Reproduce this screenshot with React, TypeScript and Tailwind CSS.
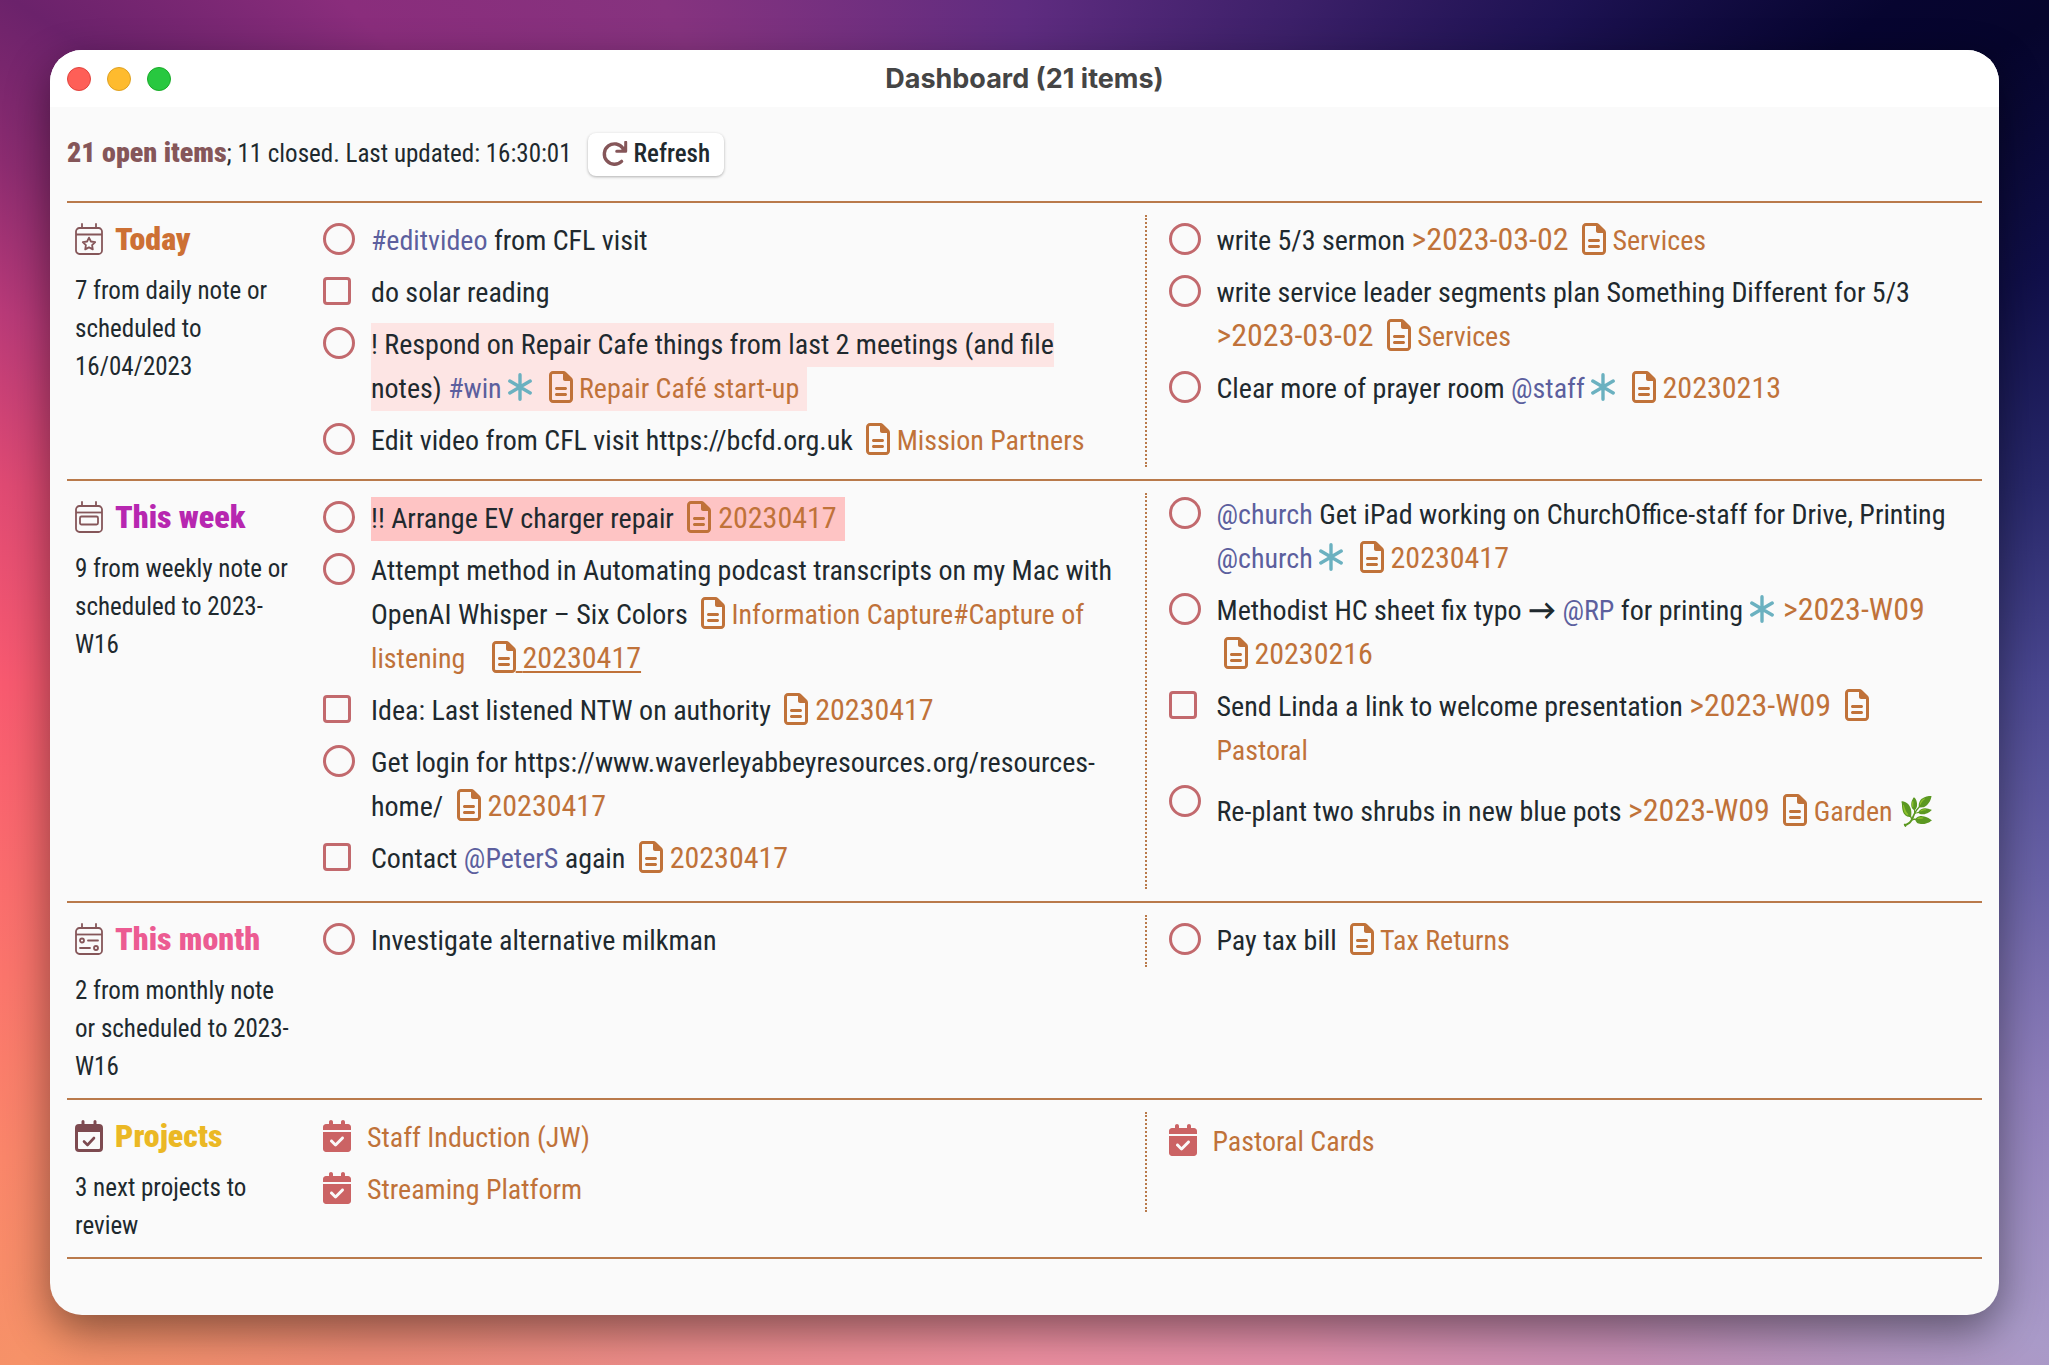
import React, { useId } from "react";
import type { ReactNode } from "react";
import { FaCalendarCheck, FaRegFileLines } from "react-icons/fa6";

/* ---------- icons ---------- */

function CalendarFrame({ children }: { children: ReactNode }) {
  return (
    <svg
      viewBox="0 0 28 32"
      className="h-8 w-7 shrink-0 text-[#855659]"
      fill="none"
      stroke="currentColor"
      strokeWidth="1.8"
      strokeLinecap="round"
      strokeLinejoin="round"
      aria-hidden="true"
    >
      <path d="M7 1v4M21 1v4" />
      <rect x="1" y="5" width="26" height="26" rx="3.5" />
      <path d="M1 11.5h26" strokeLinecap="butt" />
      {children}
    </svg>
  );
}

function CalendarStar() {
  return (
    <CalendarFrame>
      <path d="M14 14.6l1.9 3.9 4.3.6-3.1 3 .7 4.3-3.8-2-3.8 2 .7-4.3-3.1-3 4.3-.6z" />
    </CalendarFrame>
  );
}

function CalendarWeek() {
  return (
    <CalendarFrame>
      <rect x="5" y="15.5" width="18" height="8" rx="1.5" />
    </CalendarFrame>
  );
}

function CalendarMonth() {
  return (
    <CalendarFrame>
      <circle cx="7" cy="17.5" r="2" />
      <path d="M13 17.5h10" />
      <circle cx="21" cy="25" r="2" />
      <path d="M5 25h10" />
    </CalendarFrame>
  );
}

function CalendarCheckBold() {
  return (
    <svg
      viewBox="0 0 28 32"
      className="h-8 w-7 shrink-0 text-[#7d4a50]"
      fill="none"
      stroke="currentColor"
      strokeWidth="3"
      strokeLinecap="round"
      strokeLinejoin="round"
      aria-hidden="true"
    >
      <path d="M8 1.5v4M20 1.5v4" />
      <rect x="1.5" y="5.5" width="25" height="25" rx="2.5" />
      <path d="M2 5.5h24v6.5H2z" fill="currentColor" stroke="none" />
      <path d="M9 21.5l3.5 3.5 6.5-7" strokeWidth="2.6" />
    </svg>
  );
}

function Asterisk() {
  return (
    <svg
      viewBox="0 0 24 28"
      className="mr-[3px] inline h-7 w-6 align-[-3px] text-[#6bb1c0]"
      fill="none"
      stroke="currentColor"
      strokeWidth="3.4"
      strokeLinecap="round"
      aria-hidden="true"
    >
      <path d="M12 1.8v24.4M1.8 8l20.4 12M22.2 8L1.8 20" />
    </svg>
  );
}

function RefreshIcon() {
  return (
    <svg
      viewBox="0 0 26 26"
      className="size-[26px] text-[#855659]"
      fill="none"
      stroke="currentColor"
      strokeWidth="3.4"
      aria-hidden="true"
    >
      <path d="M19.6 20.4A10.2 10.2 0 1 1 21 7.4" strokeLinecap="round" />
      <path d="M23.7 1.2v9h-9" strokeWidth="3" strokeLinecap="round" strokeLinejoin="round" />
      <path d="M18 10l5-5v5z" fill="currentColor" stroke="none" />
    </svg>
  );
}

/* ---------- inline pieces ---------- */

function FileIcon() {
  return <FaRegFileLines className="ml-[7px] inline h-8 w-6 align-[-5px]" aria-hidden="true" />;
}

function NoteLink({ children }: { children: ReactNode }) {
  return (
    <a href="#" className="text-[#c07239]">
      <FileIcon /> {children}
    </a>
  );
}

function DateLink({ children, underlined = false }: { children: ReactNode; underlined?: boolean }) {
  return (
    <a
      href="#"
      className={
        underlined
          ? "text-[30px] leading-none text-[#c07239] underline decoration-2 underline-offset-3"
          : "text-[30px] leading-none text-[#c07239]"
      }
    >
      <FileIcon /> {children}
    </a>
  );
}

function Tag({ children }: { children: ReactNode }) {
  return <span className="text-[#5c5f9e]">{children}</span>;
}

function Due({ children }: { children: ReactNode }) {
  return <span className="text-[32px] leading-none text-[#c07239]">{children}</span>;
}

/* ---------- rows ---------- */

type TaskProps = { kind?: "task" | "checklist"; tall?: boolean; children: ReactNode };

function Task({ kind = "task", tall = false, children }: TaskProps) {
  const id = useId();
  return (
    <li className="flex items-start py-1">
      <span className="flex w-12 shrink-0">
        <input
          id={id}
          type="checkbox"
          className={
            kind === "task"
              ? "mt-1 size-8 appearance-none rounded-full border-3 border-[#c2696d]"
              : "mt-[6px] size-7 appearance-none rounded-[4px] border-3 border-[#c2696d]"
          }
        />
      </span>
      <label htmlFor={id} className={tall ? "min-w-0 flex-1 leading-[62px]" : "min-w-0 flex-1"}>
        {children}
      </label>
    </li>
  );
}

function Project({ children }: { children: ReactNode }) {
  return (
    <li className="flex items-start py-1 last:pb-0">
      <span className="flex w-11 shrink-0">
        <FaCalendarCheck className="mt-1 h-8 w-7 text-[#cb6364]" aria-hidden="true" />
      </span>
      <a href="#" className="text-[#c07239]">
        {children}
      </a>
    </li>
  );
}

type SectionProps = {
  icon: ReactNode;
  title: string;
  titleClass: string;
  note: string;
  left: ReactNode;
  right: ReactNode;
  gridClass?: string;
  rightClass?: string;
};

function Section({ icon, title, titleClass, note, left, right, gridClass = "", rightClass = "" }: SectionProps) {
  return (
    <section className="flex items-start border-b-2 border-[#b97a4b] py-3">
      <div className="w-64 shrink-0 pr-8 pl-2">
        <h2 className={`mb-[9px] flex h-12 items-center gap-3 text-[32px] leading-[48px] font-black ${titleClass}`}>
          {icon}
          {title}
        </h2>
        <p className="text-[25px] leading-[38px]">{note}</p>
      </div>
      <div className={`grid flex-1 grid-cols-[822fr_838fr] text-[28px] leading-[44px] ${gridClass}`}>
        <ul className="pr-6">{left}</ul>
        <ul className={`border-l-2 border-dotted border-[#b97a4b] pr-7 pl-[22px] ${rightClass}`}>{right}</ul>
      </div>
    </section>
  );
}

export default function App() {
  return (
    <div className="min-h-screen bg-[conic-gradient(#5f2c80_0deg,#3c2069_22deg,#1d1252_39deg,#070530_52deg,#06052c_57deg,#100f49_68deg,#28286b_79deg,#4a4790_90deg,#6962a6_101deg,#8f7fbb_112deg,#a99ac8_123deg,#c88fb6_138deg,#e28fab_157deg,#ee8fa0_180deg,#ee8d8c_208deg,#f08c76_225deg,#f69268_236deg,#fa866a_245deg,#fb756c_254deg,#f85a70_270deg,#df4a73_281deg,#b83a78_290deg,#8c2c70_297deg,#6b226b_304deg,#8a2d7c_315deg,#86337f_332deg,#5f2c80_360deg)] p-[50px] font-['Roboto_Condensed',Roboto,sans-serif] text-[#20292e]">
      <main className="overflow-hidden rounded-[32px] bg-[#fafafa] pb-14 shadow-[0_16px_44px_rgba(0,0,0,0.45)]">
        <header className="grid h-[57px] grid-cols-[1fr_auto_1fr] items-center bg-white px-[17px]">
          <div className="flex gap-4">
            <button aria-label="Close" className="size-6 rounded-full border border-[#e0443e] bg-[#fe5f57]" />
            <button aria-label="Minimize" className="size-6 rounded-full border border-[#dea123] bg-[#febb2e]" />
            <button aria-label="Zoom" className="size-6 rounded-full border border-[#1aab29] bg-[#28c840]" />
          </div>
          <h1 className="font-[Inter,sans-serif] text-[27px] leading-9 font-bold text-[#454545]">
            Dashboard (21 items)
          </h1>
        </header>

        <div className="px-[17px]">
          <div className="flex h-24 items-center gap-4 border-b-2 border-[#b97a4b] text-[25px]">
            <p>
              <strong className="text-[28px] leading-none font-black text-[#855659]">21 open items</strong>; 11 closed.
              Last updated: 16:30:01
            </p>
            <button className="flex h-[43px] items-center gap-[6px] rounded-lg bg-white px-[14px] font-medium shadow-[0_1px_3px_rgba(0,0,0,0.3)]">
              <RefreshIcon />
              Refresh
            </button>
          </div>

          <Section
            icon={<CalendarStar />}
            title="Today"
            titleClass="text-[#cd7034]"
            note="7 from daily note or scheduled to 16/04/2023"
            left={
              <>
                <Task>
                  <Tag>#editvideo</Tag> from CFL visit
                </Task>
                <Task kind="checklist">do solar reading</Task>
                <Task>
                  <span className="bg-[#fde5e4] pt-[5px] pr-2 pb-[6px]">
                    ! Respond on Repair Cafe things from last 2 meetings (and file notes) <Tag>#win</Tag> <Asterisk />{" "}
                    <NoteLink>Repair Café start-up</NoteLink>
                  </span>
                </Task>
                <Task>
                  Edit video from CFL visit https://bcfd.org.uk <NoteLink>Mission Partners</NoteLink>
                </Task>
              </>
            }
            right={
              <>
                <Task>
                  write 5/3 sermon <Due>&gt;2023-03-02</Due> <NoteLink>Services</NoteLink>
                </Task>
                <Task>
                  write service leader segments plan Something Different for 5/3 <Due>&gt;2023-03-02</Due>{" "}
                  <NoteLink>Services</NoteLink>
                </Task>
                <Task>
                  Clear more of prayer room <Tag>@staff</Tag> <Asterisk /> <DateLink>20230213</DateLink>
                </Task>
              </>
            }
          />

          <Section
            icon={<CalendarWeek />}
            title="This week"
            titleClass="text-[#b727b0]"
            note="9 from weekly note or scheduled to 2023-W16"
            gridClass="min-h-[396px]"
            rightClass="*:relative *:-top-1"
            left={
              <>
                <Task>
                  <span className="bg-[#fec4c4] pt-[5px] pr-2 pb-[6px]">
                    !! Arrange EV charger repair <DateLink>20230417</DateLink>
                  </span>
                </Task>
                <Task>
                  Attempt method in Automating podcast transcripts on my Mac with OpenAI Whisper – Six Colors{" "}
                  <NoteLink>Information Capture#Capture of listening</NoteLink> &nbsp;&nbsp;
                  <DateLink underlined>20230417</DateLink>
                </Task>
                <Task kind="checklist">
                  Idea: Last listened NTW on authority <DateLink>20230417</DateLink>
                </Task>
                <Task>
                  Get login for https://www.waverleyabbeyresources.org/resources-home/ <DateLink>20230417</DateLink>
                </Task>
                <Task kind="checklist">
                  Contact <Tag>@PeterS</Tag> again <DateLink>20230417</DateLink>
                </Task>
              </>
            }
            right={
              <>
                <Task>
                  <Tag>@church</Tag> Get iPad working on ChurchOffice-staff for Drive, Printing <Tag>@church</Tag>{" "}
                  <Asterisk /> <DateLink>20230417</DateLink>
                </Task>
                <Task>
                  Methodist HC sheet fix typo <span className="font-[Lato,sans-serif] leading-none font-bold">→</span>{" "}
                  <Tag>@RP</Tag> for printing <Asterisk /> <Due>&gt;2023-W09</Due> <DateLink>20230216</DateLink>
                </Task>
                <Task kind="checklist">
                  Send Linda a link to welcome presentation <Due>&gt;2023-W09</Due> <NoteLink>Pastoral</NoteLink>
                </Task>
                <Task tall>
                  Re-plant two shrubs in new blue pots <Due>&gt;2023-W09</Due> <NoteLink>Garden 🌿</NoteLink>
                </Task>
              </>
            }
          />

          <Section
            icon={<CalendarMonth />}
            title="This month"
            titleClass="text-[#ec5b92]"
            note="2 from monthly note or scheduled to 2023-W16"
            left={<Task>Investigate alternative milkman</Task>}
            right={
              <Task>
                Pay tax bill <NoteLink>Tax Returns</NoteLink>
              </Task>
            }
          />

          <Section
            icon={<CalendarCheckBold />}
            title="Projects"
            titleClass="text-[#ebb824]"
            note="3 next projects to review"
            rightClass="pt-1"
            left={
              <>
                <Project>Staff Induction (JW)</Project>
                <Project>Streaming Platform</Project>
              </>
            }
            right={<Project>Pastoral Cards</Project>}
          />
        </div>
      </main>
    </div>
  );
}
